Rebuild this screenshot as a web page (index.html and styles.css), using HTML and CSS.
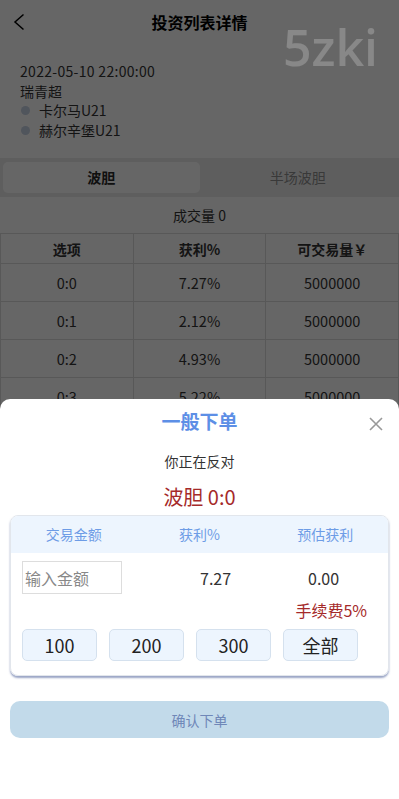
FILE: index.html
```html
<!DOCTYPE html>
<html lang="zh-CN">
<head>
  <meta charset="UTF-8">
  <meta name="viewport" content="width=device-width, initial-scale=1.0">
  <title>投资列表详情</title>
  <link rel="stylesheet" href="styles.css">
</head>
<body>
  <div class="page">
    <div class="nav">
      <span class="back">
        <svg width="12" height="18" viewBox="0 0 12 18"><path d="M10.5 1.5 L2 9 L10.5 16.5" fill="none" stroke="#000" stroke-width="1.5"/></svg>
      </span>
      <h1>投资列表详情</h1>
      <span></span>
    </div>

    <div class="match">
      <div class="time">2022-05-10 22:00:00</div>
      <div>瑞青超</div>
      <div class="team"><i class="dot"></i>卡尔马U21</div>
      <div class="team"><i class="dot"></i>赫尔辛堡U21</div>
    </div>

    <div class="tabs">
      <div class="tab active">波胆</div>
      <div class="tab">半场波胆</div>
    </div>

    <div class="volume">成交量 0</div>

    <table class="odds">
      <thead>
        <tr><th>选项</th><th>获利%</th><th>可交易量￥</th></tr>
      </thead>
      <tbody>
        <tr><td>0:0</td><td>7.27%</td><td>5000000</td></tr>
        <tr><td>0:1</td><td>2.12%</td><td>5000000</td></tr>
        <tr><td>0:2</td><td>4.93%</td><td>5000000</td></tr>
        <tr><td>0:3</td><td>5.22%</td><td>5000000</td></tr>
      </tbody>
    </table>
  </div>

  <!-- popup -->
  <div class="mask"></div>
  <div class="mark">5zki</div>

  <div class="sheet">
    <div class="sheet-title">
      一般下单
      <span class="close">
        <svg width="14" height="14" viewBox="0 0 14 14"><path d="M1 1 L13 13 M13 1 L1 13" stroke="#999" stroke-width="1.6"/></svg>
      </span>
    </div>
    <div class="against">你正在反对</div>
    <div class="pick">波胆 0:0</div>

    <div class="card">
      <div class="card-head">
        <span>交易金额</span>
        <span>获利%</span>
        <span>预估获利</span>
      </div>
      <div class="card-row">
        <input class="amount" type="text" placeholder="输入金额">
        <span>7.27</span>
        <span>0.00</span>
      </div>
      <div class="fee">手续费5%</div>
      <div class="quick">
        <button>100</button>
        <button>200</button>
        <button>300</button>
        <button>全部</button>
      </div>
    </div>

    <button class="confirm">确认下单</button>
  </div>
</body>
</html>
```

FILE: styles.css
```css
body {
  margin: 0;
  width: 399px;
  height: 799px;
  overflow: hidden;
  background: #fff;
  color: #333;
  font-family: "Noto Sans CJK SC", "Noto Sans", sans-serif;
  font-size: 14px;
}

.nav {
  display: grid;
  grid-template-columns: 40px 1fr 40px;
  align-items: center;
  height: 44px;
}
.back {
  display: flex;
  padding-left: 13px;
}
.nav h1 {
  margin: 0;
  text-align: center;
  font-size: 16px;
  font-weight: bold;
  color: #000;
}

.match {
  padding: 18px 20px 0;
  line-height: 19.5px;
  font-size: 14px;
  color: #333;
}
.time {
  letter-spacing: 0.3px;
}
.team {
  display: flex;
  align-items: center;
}
.dot {
  width: 9px;
  height: 9px;
  border-radius: 50%;
  background: #c8d4e6;
  margin: 0 9px 0 1px;
}

.tabs {
  display: flex;
  margin-top: 18px;
  padding: 4px 3px;
  background: #ececec;
}
.tab {
  flex: 1;
  height: 31px;
  line-height: 31px;
  text-align: center;
  color: #8e8e8e;
  border-radius: 5px;
}
.tab.active {
  background: #fff;
  color: #2a2a2a;
  font-weight: bold;
}

.volume {
  text-align: center;
  line-height: 20px;
  margin-top: 8px;
  color: #333;
}

.odds {
  width: 100%;
  margin-top: 8px;
  border-collapse: collapse;
  table-layout: fixed;
}
.odds th, .odds td {
  border: 1px solid #ddd;
  text-align: center;
  padding: 0;
  color: #333;
}
.odds th {
  height: 29px;
  font-weight: bold;
}
.odds td {
  height: 37px;
  font-size: 14.5px;
}

/* popup */
.mask {
  position: fixed;
  inset: 0;
  background: rgba(0, 0, 0, 0.6);
  z-index: 10;
}
.mark {
  position: fixed;
  top: 17px;
  right: 21px;
  z-index: 11;
  font-family: "Open Sans", sans-serif;
  font-weight: 600;
  font-size: 50px;
  line-height: 60px;
  color: rgba(255, 255, 255, 0.22);
}

.sheet {
  position: fixed;
  left: 0;
  right: 0;
  bottom: 0;
  height: 400px;
  box-sizing: border-box;
  padding: 10px 10px 0;
  background: #fff;
  border-radius: 10px 10px 0 0;
  z-index: 12;
}
.sheet-title {
  position: relative;
  text-align: center;
  font-size: 19px;
  font-weight: bold;
  line-height: 24px;
  color: #5d8fe6;
}
.close {
  position: absolute;
  right: 6px;
  top: 8px;
  display: flex;
}
.against {
  margin-top: 18px;
  text-align: center;
  line-height: 20px;
  color: #333;
}
.pick {
  margin-top: 12px;
  text-align: center;
  font-size: 20px;
  line-height: 28px;
  color: #a52a2a;
}

.card {
  margin-top: 4px;
  border: 1px solid #e2e6ec;
  border-radius: 8px;
  overflow: hidden;
  box-shadow: 0 2px 2px rgba(70, 90, 150, 0.55);
}
.card-head {
  display: grid;
  grid-template-columns: repeat(3, 1fr);
  height: 37px;
  line-height: 37px;
  background: #edf5fe;
  color: #6d9ce6;
  text-align: center;
}
.card-row {
  display: grid;
  grid-template-columns: 178px 108px auto;
  align-items: center;
  padding: 8px 0 0 11px;
  font-size: 16px;
  color: #333;
}
.amount {
  width: 100px;
  height: 33px;
  box-sizing: border-box;
  border: 1px solid #ddd;
  padding: 0 2px;
  font-family: inherit;
  font-size: 16px;
  outline: none;
}
.amount::placeholder {
  color: #888;
}
.fee {
  margin-top: 6px;
  padding-right: 21px;
  text-align: right;
  font-size: 16px;
  line-height: 20px;
  color: #a52a2a;
}
.quick {
  display: flex;
  gap: 12px;
  padding: 9px 0 14px 11px;
}
.quick button {
  width: 75px;
  height: 32px;
  border: 1px solid #d5e1ee;
  border-radius: 5px;
  background: #edf5fe;
  color: #222;
  font-family: inherit;
  font-size: 18px;
  padding: 0;
}

.confirm {
  display: block;
  width: 100%;
  height: 37px;
  margin-top: 25px;
  border: none;
  border-radius: 10px;
  background: #c2daea;
  color: #6f87b8;
  font-family: inherit;
  font-size: 14px;
}
```
